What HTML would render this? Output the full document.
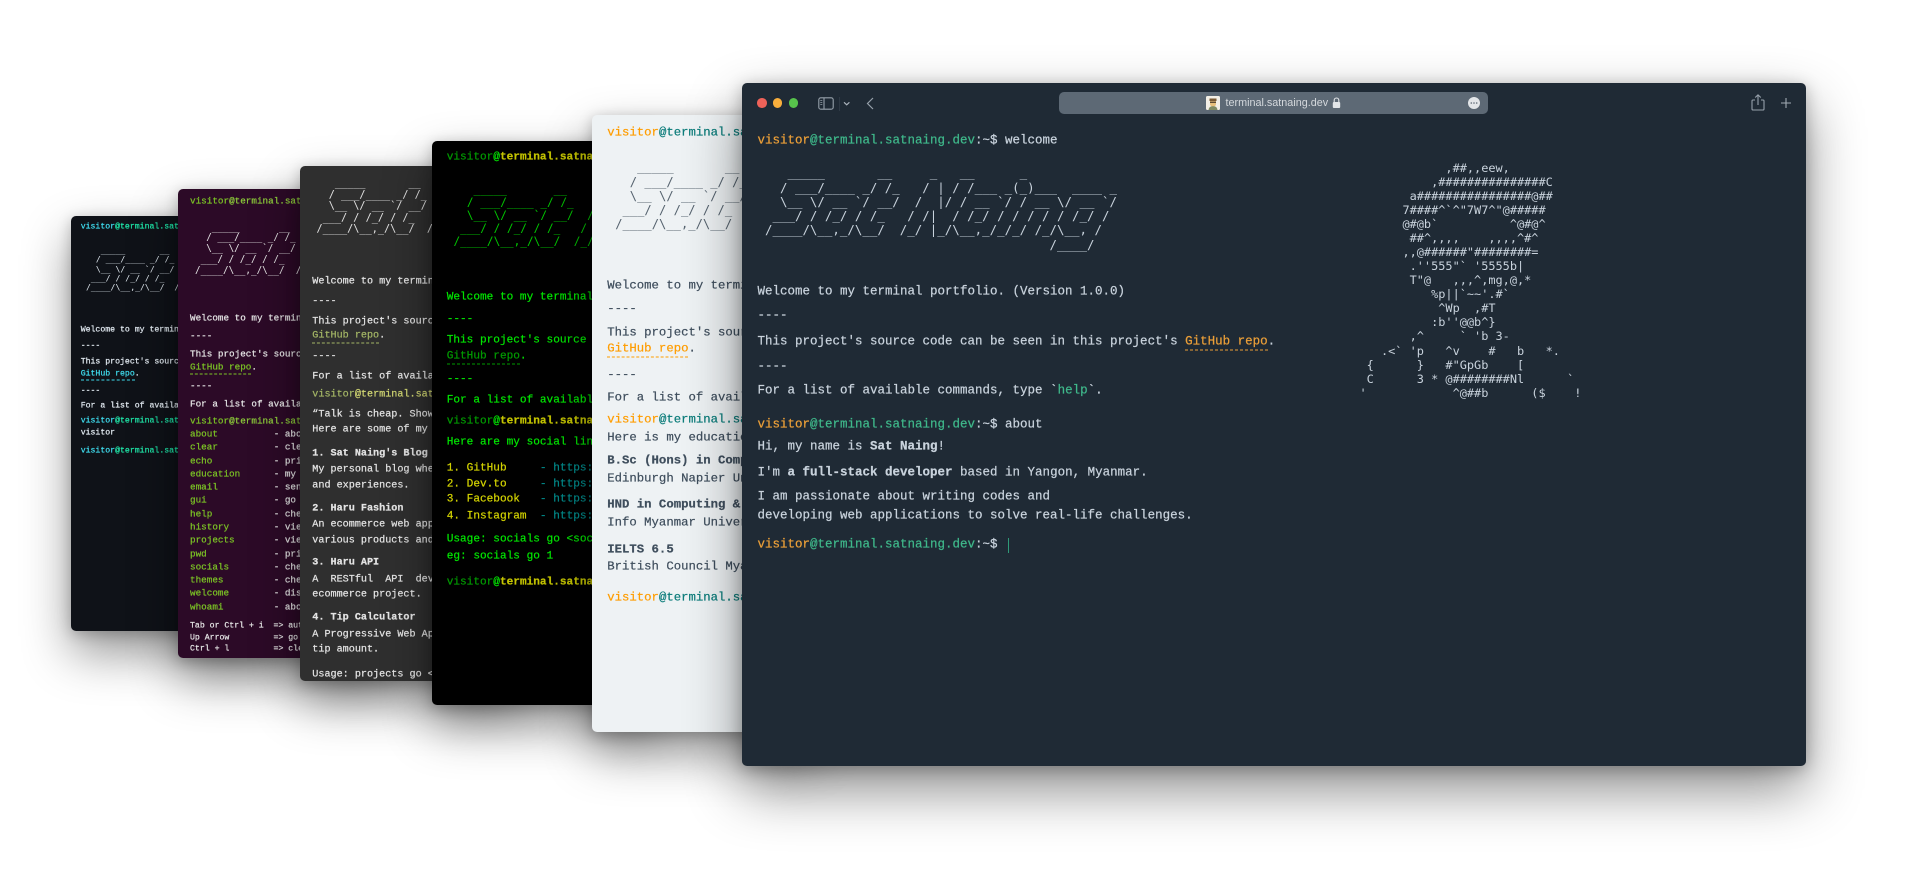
<!DOCTYPE html>
<html lang="en"><head><meta charset="utf-8"><title>terminal.satnaing.dev</title>
<style>
html,body{margin:0;padding:0;width:1920px;height:877px;overflow:hidden;background:#fff}
body{filter:blur(.3px)}
.w{position:absolute;overflow:hidden;border-radius:5px;box-shadow:0 22px 48px rgba(0,0,0,.42),0 3px 14px rgba(0,0,0,.22);font-family:"Liberation Mono",monospace;-webkit-text-stroke:.22px}
.w p{position:absolute;margin:0;white-space:pre;left:var(--x);transform:translateY(.5px)}
.w pre{position:absolute;margin:0;font-family:"DejaVu Sans Mono",monospace;left:var(--ax);white-space:pre;-webkit-text-stroke:0}
a{text-decoration:none;border-bottom:1px dashed currentColor;padding-bottom:1px}
b{font-weight:700}
#w1{left:71px;top:216px;width:220px;height:415px;background:#0f1218;color:#e1e9f0;font-size:8.2px;line-height:10px;--x:9.7px;--ax:15px;z-index:1}
#w1 pre{font-size:8.17px;line-height:9.3px;top:30px}
#w1 i{font-style:normal;color:#3fdcee} #w1 u{text-decoration:none;color:#1fe6a8} #w1 a{color:#3fdcee}
#w2{left:178px;top:188.5px;width:220px;height:469.5px;background:#2c0a27;color:#e6e6e6;font-size:9.3px;line-height:12px;--x:12px;--ax:17px;z-index:2}
#w2 pre{font-size:9.3px;line-height:10.9px;top:34px}
#w2 i,#w2 a,#w2 em{font-style:normal;color:#7cc425} #w2 u{text-decoration:none;color:#8ccb3a}
#w2 .s{font-size:8.2px}
#w3{left:299.5px;top:166px;width:220px;height:514.5px;background:#2f2f2f;color:#e4e4e4;font-size:10.15px;line-height:13px;--x:12.8px;--ax:17px;z-index:3}
#w3 pre{font-size:10.2px;line-height:11.5px;top:12px}
#w3 i,#w3 a{font-style:normal;color:#a3b565} #w3 u{text-decoration:none;color:#d3d873}
#w4{left:432px;top:141px;width:220px;height:564px;background:#000;color:#00e600;font-size:11.1px;line-height:14px;--x:14.7px;--ax:21.5px;z-index:4}
#w4 pre{font-size:11.1px;line-height:13.2px;top:41.6px;color:#00c800}
#w4 i{font-style:normal;color:#009a00} #w4 u{text-decoration:none;color:#c4c400} #w4 s{text-decoration:none;color:#00e000}
#w4 a{color:#009a00} #w4 em{font-style:normal;color:#d4d400} #w4 q{quotes:none;color:#008b8b}
#w5{left:591.7px;top:115.3px;width:220px;height:616.3px;background:#eef2f4;color:#3f4e5d;font-size:12.3px;line-height:15px;--x:15.6px;--ax:23.5px;z-index:5}
#w5 pre{font-size:12.15px;line-height:14.3px;top:45px;color:#55626e}
#w5 i,#w5 a{font-style:normal;color:#ff9d00} #w5 u{text-decoration:none;color:#0b7c7a}
#m{left:741.5px;top:82.7px;width:1064.5px;height:683.5px;background:#1f2a35;color:#c9d3dd;font-size:12.5px;line-height:15px;--x:16px;--ax:23.5px;z-index:6;box-shadow:0 24px 56px rgba(0,0,0,.45),0 3px 16px rgba(0,0,0,.25)}
#m pre{font-size:12.45px;line-height:14.25px;top:83.6px}
#m pre.p{left:618px;top:78px;font-size:11.9px;line-height:14.06px}
#m i,#m a{font-style:normal;color:#eb9f38} #m u{text-decoration:none;color:#3fb98b}
.ab{position:absolute}
</style></head><body>

<div class="w" id="w1">
<p style="top:5.7px"><i>visitor</i><u>@terminal.satnaing.dev</u>:~$ </p>
<pre>   _____       __     _   __      _
  / ___/____ _/ /_   / | / /___ _(_)___  ____ _
  \__ \/ __ `/ __/  /  |/ / __ `/ / __ \/ __ `/
 ___/ / /_/ / /_   / /|  / /_/ / / / / / /_/ /
/____/\__,_/\__/  /_/ |_/\__,_/_/_/ /_/\__, /</pre>
<p style="top:109px">Welcome to my terminal portfolio.</p>
<p style="top:125px">----</p>
<p style="top:141px">This project's source code</p>
<p style="top:152.7px"><a>GitHub repo</a>.</p>
<p style="top:169.7px">----</p>
<p style="top:185px">For a list of available</p>
<p style="top:200px"><i>visitor</i><u>@terminal.satnaing.dev</u>:~$ whoami</p>
<p style="top:212px">visitor</p>
<p style="top:230px"><i>visitor</i><u>@terminal.satnaing.dev</u>:~$</p>
</div>

<div class="w" id="w2">
<p style="top:6.8px"><i>visitor</i><u>@terminal.satnaing.dev</u>:~$</p>
<pre>   _____       __     _   __      _
  / ___/____ _/ /_   / | / /___ _(_)___  ____ _
  \__ \/ __ `/ __/  /  |/ / __ `/ / __ \/ __ `/
 ___/ / /_/ / /_   / /|  / /_/ / / / / / /_/ /
/____/\__,_/\__/  /_/ |_/\__,_/_/_/ /_/\__, /</pre>
<p style="top:123.5px">Welcome to my terminal portfolio.</p>
<p style="top:141.5px">----</p>
<p style="top:159.5px">This project's source code</p>
<p style="top:172.2px"><a>GitHub repo</a>.</p>
<p style="top:191.2px">----</p>
<p style="top:209.5px">For a list of available</p>
<p style="top:226.8px"><i>visitor</i><u>@terminal.satnaing.dev</u>:~$ help</p>
<p style="top:239.5px"><em>about</em>          - about Sat Naing</p>
<p style="top:252.8px"><em>clear</em>          - clear the terminal</p>
<p style="top:266px"><em>echo</em>           - print out anything</p>
<p style="top:279.3px"><em>education</em>      - my education background</p>
<p style="top:292.6px"><em>email</em>          - send an email to me</p>
<p style="top:305.9px"><em>gui</em>            - go to my portfolio in GUI</p>
<p style="top:319.1px"><em>help</em>           - check available commands</p>
<p style="top:332.4px"><em>history</em>        - view command history</p>
<p style="top:345.7px"><em>projects</em>       - view projects that I've coded</p>
<p style="top:359px"><em>pwd</em>            - print current working directory</p>
<p style="top:372.2px"><em>socials</em>        - check out my social accounts</p>
<p style="top:385.5px"><em>themes</em>         - check available themes</p>
<p style="top:398.8px"><em>welcome</em>        - display hero section</p>
<p style="top:412px"><em>whoami</em>         - about current user</p>
<p class="s" style="top:431.5px">Tab or Ctrl + i  =&gt; autocompletes the command</p>
<p class="s" style="top:443.2px">Up Arrow         =&gt; go back to previous command</p>
<p class="s" style="top:454.8px">Ctrl + l         =&gt; clear the terminal</p>
</div>

<div class="w" id="w3">
<pre>   _____       __     _   __      _
  / ___/____ _/ /_   / | / /___ _(_)___  ____ _
  \__ \/ __ `/ __/  /  |/ / __ `/ / __ \/ __ `/
 ___/ / /_/ / /_   / /|  / /_/ / / / / / /_/ /
/____/\__,_/\__/  /_/ |_/\__,_/_/_/ /_/\__, /</pre>
<p style="top:109.2px">Welcome to my terminal portfolio.</p>
<p style="top:128.8px">----</p>
<p style="top:148.8px">This project's source code</p>
<p style="top:163px"><a>GitHub repo</a>.</p>
<p style="top:184.3px">----</p>
<p style="top:203.9px">For a list of available</p>
<p style="top:221.8px"><i>visitor</i><u>@terminal.satnaing.dev</u>:~$ projects</p>
<p style="top:241.5px">“Talk is cheap. Show me the code.”</p>
<p style="top:257.3px">Here are some of my projects</p>
<p style="top:280.9px"><b>1. Sat Naing's Blog</b></p>
<p style="top:297.2px">My personal blog where I write</p>
<p style="top:312.7px">and experiences.</p>
<p style="top:335.7px"><b>2. Haru Fashion</b></p>
<p style="top:352.3px">An ecommerce web application</p>
<p style="top:367.5px">various products and make</p>
<p style="top:390.1px"><b>3. Haru API</b></p>
<p style="top:406.7px">A  RESTful  API  developed</p>
<p style="top:422.3px">ecommerce project.</p>
<p style="top:444.9px"><b>4. Tip Calculator</b></p>
<p style="top:461.5px">A Progressive Web App</p>
<p style="top:477px">tip amount.</p>
<p style="top:501.7px">Usage: projects go &lt;project-no&gt;</p>
</div>

<div class="w" id="w4">
<p style="top:9px"><i>visitor</i><s>@</s><u><b>terminal.satnaing.dev</b></u></p>
<pre>   _____       __     _   __      _
  / ___/____ _/ /_   / | / /___ _(_)___  ____ _
  \__ \/ __ `/ __/  /  |/ / __ `/ / __ \/ __ `/
 ___/ / /_/ / /_   / /|  / /_/ / / / / / /_/ /
/____/\__,_/\__/  /_/ |_/\__,_/_/_/ /_/\__, /</pre>
<p style="top:148.9px">Welcome to my terminal portfolio.</p>
<p style="top:170.7px">----</p>
<p style="top:192px">This project's source code</p>
<p style="top:207.7px"><a>GitHub repo</a>.</p>
<p style="top:230.6px">----</p>
<p style="top:252px">For a list of available</p>
<p style="top:273px"><i>visitor</i><s>@</s><u><b>terminal.satnaing.dev</b></u></p>
<p style="top:293.5px">Here are my social links</p>
<p style="top:319.8px"><em>1. GitHub</em>     <q>-</q> <q>https://github.com</q></p>
<p style="top:335.7px"><em>2. Dev.to</em>     <q>-</q> <q>https://dev.to</q></p>
<p style="top:351.2px"><em>3. Facebook</em>   <q>-</q> <q>https://facebook.com</q></p>
<p style="top:367.5px"><em>4. Instagram</em>  <q>-</q> <q>https://instagram.com</q></p>
<p style="top:391.2px">Usage: socials go &lt;social-no&gt;</p>
<p style="top:408.2px">eg: socials go 1</p>
<p style="top:434px"><i>visitor</i><s>@</s><u><b>terminal.satnaing.dev</b></u></p>
</div>

<div class="w" id="w5">
<p style="top:9.6px"><i>visitor</i><u>@terminal.satnaing.dev</u></p>
<pre>   _____       __     _   __      _
  / ___/____ _/ /_   / | / /___ _(_)___  ____ _
  \__ \/ __ `/ __/  /  |/ / __ `/ / __ \/ __ `/
 ___/ / /_/ / /_   / /|  / /_/ / / / / / /_/ /
/____/\__,_/\__/  /_/ |_/\__,_/_/_/ /_/\__, /</pre>
<p style="top:162.7px">Welcome to my terminal portfolio.</p>
<p style="top:186px">----</p>
<p style="top:209.6px">This project's source code</p>
<p style="top:226px"><a>GitHub repo</a>.</p>
<p style="top:251.7px">----</p>
<p style="top:275px">For a list of available</p>
<p style="top:297.2px"><i>visitor</i><u>@terminal.satnaing.dev</u></p>
<p style="top:315px">Here is my education background</p>
<p style="top:338.2px"><b>B.Sc (Hons) in Computing</b></p>
<p style="top:355.8px">Edinburgh Napier University</p>
<p style="top:382.2px"><b>HND in Computing &amp; IT</b></p>
<p style="top:400.2px">Info Myanmar University</p>
<p style="top:426.8px"><b>IELTS 6.5</b></p>
<p style="top:444.2px">British Council Myanmar</p>
<p style="top:474.5px"><i>visitor</i><u>@terminal.satnaing.dev</u></p>
</div>

<div class="w" id="m">
<!-- toolbar -->
<div class="ab" style="left:15.700px;top:15.500px;width:9.600px;height:9.600px;border-radius:50%;background:#ee6259"></div>
<div class="ab" style="left:31.400px;top:15.500px;width:9.600px;height:9.600px;border-radius:50%;background:#f8ae3c"></div>
<div class="ab" style="left:47px;top:15.500px;width:9.600px;height:9.600px;border-radius:50%;background:#57c44c"></div>
<svg class="ab" style="left:76px;top:13px" width="58" height="16" viewBox="0 0 58 16" fill="none" stroke="#97a1ab" stroke-width="1.1">
<rect x=".8" y="1.8" width="14.4" height="11.4" rx="2"/><path d="M6 2v11"/><path d="M2.3 4.6h2M2.3 6.6h2M2.3 8.6h2" stroke-width=".8"/>
<path d="M21.5 1v14" stroke="#2f3a45"/>
<path d="M26 6.3l2.7 2.5 2.7-2.5" stroke="#aab3bc" stroke-width="1.2"/>
<path d="M55 2l-5.500 5.500L55 13" stroke-width="1.2"/></svg>
<div class="ab" style="left:317.5px;top:9.3px;width:429px;height:22px;background:#5d6975;border-radius:5px"></div>
<svg class="ab" style="left:464.5px;top:13.8px" width="14" height="14" viewBox="0 0 14 14">
<rect width="14" height="14" rx="1.5" fill="#f3efe6"/><path d="M3.5 5V2.5h7V5z" fill="#7a5a33"/><path d="M4 5h6v3.2a3 2.4 0 0 1-6 0z" fill="#e8c07c"/><path d="M4 5.6h6v1.300H4z" fill="#4a3b2a"/><path d="M2.500 14c.4-3 2-3.800 4.500-3.800s4.100.800 4.500 3.800z" fill="#7f8a63"/></svg>
<div class="ab" style="left:484px;top:13.500px;font:10.8px/15px 'Liberation Sans',sans-serif;color:#d5d9dd;white-space:nowrap;-webkit-text-stroke:0">terminal.satnaing.dev</div>
<svg class="ab" style="left:590px;top:14.5px" width="9" height="12" viewBox="0 0 9 12"><path d="M2.200 5V3.300a2.300 2.300 0 0 1 4.600 0V5" fill="none" stroke="#e3e6e9" stroke-width="1.100"/><rect x=".8" y="5" width="7.400" height="6" rx="1" fill="#e3e6e9"/></svg>
<svg class="ab" style="left:726.500px;top:14.300px" width="12" height="12" viewBox="0 0 12 12"><circle cx="6" cy="6" r="6" fill="#e3e6e9"/><circle cx="3.300" cy="6" r=".8" fill="#5d6975"/><circle cx="6" cy="6" r=".8" fill="#5d6975"/><circle cx="8.700" cy="6" r=".8" fill="#5d6975"/></svg>
<svg class="ab" style="left:1009px;top:11px" width="14" height="17" viewBox="0 0 14 17" fill="none" stroke="#97a1ab" stroke-width="1.100"><path d="M4 6H2a1 1 0 0 0-1 1v8a1 1 0 0 0 1 1h10a1 1 0 0 0 1-1V7a1 1 0 0 0-1-1h-2"/><path d="M7 11V1M4.200 3.500L7 .9l2.800 2.600"/></svg>
<svg class="ab" style="left:1039.500px;top:15px" width="10" height="10" viewBox="0 0 10 10" stroke="#a2abb4" stroke-width="1.100"><path d="M5 0v10M0 5h10"/></svg>

<p style="top:50.5px"><i>visitor</i><u>@terminal.satnaing.dev</u>:~$ welcome</p>
<pre>   _____       __     _   __      _
  / ___/____ _/ /_   / | / /___ _(_)___  ____ _
  \__ \/ __ `/ __/  /  |/ / __ `/ / __ \/ __ `/
 ___/ / /_/ / /_   / /|  / /_/ / / / / / /_/ /
/____/\__,_/\__/  /_/ |_/\__,_/_/_/ /_/\__, /
                                      /____/</pre>
<p style="top:201.8px">Welcome to my terminal portfolio. (Version 1.0.0)</p>
<p style="top:225.5px">----</p>
<p style="top:251.3px">This project's source code can be seen in this project's <a>GitHub repo</a>.</p>
<p style="top:276.8px">----</p>
<p style="top:300.8px">For a list of available commands, type `<u>help</u>`.</p>
<p style="top:334.8px"><i>visitor</i><u>@terminal.satnaing.dev</u>:~$ about</p>
<p style="top:356.8px">Hi, my name is <b>Sat Naing</b>!</p>
<p style="top:382.5px">I'm <b>a full-stack developer</b> based in Yangon, Myanmar.</p>
<p style="top:406.8px">I am passionate about writing codes and</p>
<p style="top:425.8px">developing web applications to solve real-life challenges.</p>
<p style="top:454.8px"><i>visitor</i><u>@terminal.satnaing.dev</u>:~$</p>
<div class="ab" style="left:266.300px;top:455.300px;width:1px;height:15px;background:#2f9a78"></div>
<pre class="p">            ,##,,eew,
          ,###############C
       a################@##
      7####^`^"7W7^"@#####
      @#@b`          ^@#@^
       ##^,,,,    ,,,,^#^
      ,,@######"########=
       .''555"` '5555b|
       T"@   ,,,^,mg,@,*
          %p||`~~'.#`
           ^Wp  ,#T
          :b''@@b^}
       ,^     ` 'b 3-
   .&lt;` 'p   ^v    #   b   *.
 {      }   #"GpGb    [
 C      3 * @########Nl      `
'            ^@##b      ($    !</pre>
</div>
</body></html>
